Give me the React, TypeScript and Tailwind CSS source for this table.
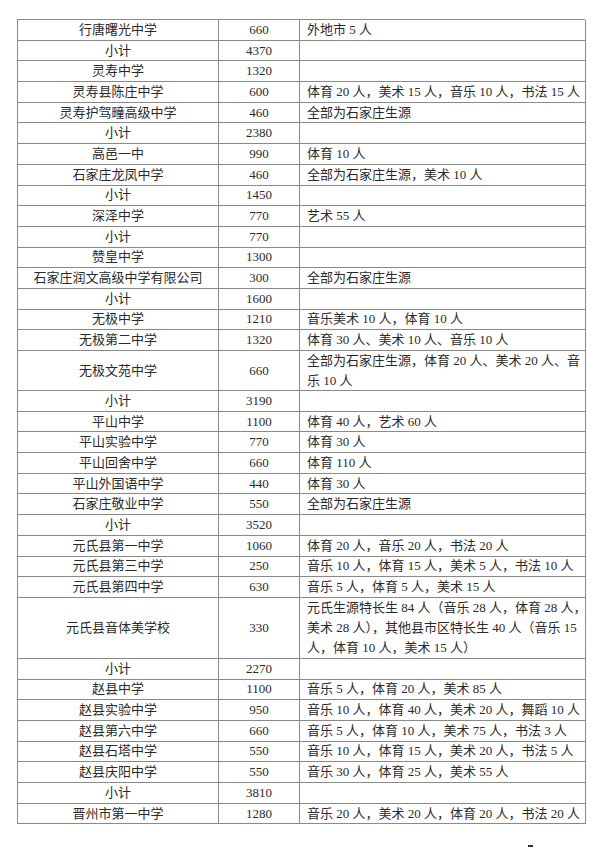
type Row = {
  name: string;
  count: string;
  note?: string[];
  h?: string;
};

const rows: Row[] = [
  { name: '行唐曙光中学', count: '660', note: ['外地市 5 人'] },
  { name: '小计', count: '4370' },
  { name: '灵寿中学', count: '1320' },
  { name: '灵寿县陈庄中学', count: '600', note: ['体育 20 人，美术 15 人，音乐 10 人，书法 15 人'] },
  { name: '灵寿护驾疃高级中学', count: '460', note: ['全部为石家庄生源'] },
  { name: '小计', count: '2380' },
  { name: '高邑一中', count: '990', note: ['体育 10 人'] },
  { name: '石家庄龙凤中学', count: '460', note: ['全部为石家庄生源，美术 10 人'] },
  { name: '小计', count: '1450' },
  { name: '深泽中学', count: '770', note: ['艺术 55 人'] },
  { name: '小计', count: '770' },
  { name: '赞皇中学', count: '1300' },
  { name: '石家庄润文高级中学有限公司', count: '300', note: ['全部为石家庄生源'] },
  { name: '小计', count: '1600' },
  { name: '无极中学', count: '1210', note: ['音乐美术 10 人，体育 10 人'] },
  { name: '无极第二中学', count: '1320', note: ['体育 30 人、美术 10 人、音乐 10 人'] },
  {
    name: '无极文苑中学',
    count: '660',
    note: ['全部为石家庄生源，体育 20 人、美术 20 人、音', '乐 10 人'],
    h: 'h-[40px]',
  },
  { name: '小计', count: '3190' },
  { name: '平山中学', count: '1100', note: ['体育 40 人，艺术 60 人'] },
  { name: '平山实验中学', count: '770', note: ['体育 30 人'] },
  { name: '平山回舍中学', count: '660', note: ['体育 110 人'] },
  { name: '平山外国语中学', count: '440', note: ['体育 30 人'] },
  { name: '石家庄敬业中学', count: '550', note: ['全部为石家庄生源'] },
  { name: '小计', count: '3520' },
  { name: '元氏县第一中学', count: '1060', note: ['体育 20 人，音乐 20 人，书法 20 人'] },
  { name: '元氏县第三中学', count: '250', note: ['音乐 10 人，体育 15 人，美术 5 人，书法 10 人'] },
  { name: '元氏县第四中学', count: '630', note: ['音乐 5 人，体育 5 人，美术 15 人'] },
  {
    name: '元氏县音体美学校',
    count: '330',
    note: [
      '元氏生源特长生 84 人（音乐 28 人，体育 28 人，',
      '美术 28 人），其他县市区特长生 40 人（音乐 15',
      '人，体育 10 人，美术 15 人）',
    ],
    h: 'h-[61px]',
  },
  { name: '小计', count: '2270' },
  { name: '赵县中学', count: '1100', note: ['音乐 5 人，体育 20 人，美术 85 人'] },
  { name: '赵县实验中学', count: '950', note: ['音乐 10 人，体育 40 人，美术 20 人，舞蹈 10 人'] },
  { name: '赵县第六中学', count: '660', note: ['音乐 5 人，体育 10 人，美术 75 人，书法 3 人'] },
  { name: '赵县石塔中学', count: '550', note: ['音乐 10 人，体育 15 人，美术 20 人，书法 5 人'] },
  { name: '赵县庆阳中学', count: '550', note: ['音乐 30 人，体育 25 人，美术 55 人'] },
  { name: '小计', count: '3810' },
  { name: '晋州市第一中学', count: '1280', note: ['音乐 20 人，美术 20 人，体育 20 人，书法 20 人'] },
];

export default function App() {
  return (
    <div
      className="h-[848px] w-[600px] overflow-hidden bg-white pt-[19px] text-[13px] text-[#2a2a2a]"
      style={{ fontFamily: '"Liberation Serif", "Noto Sans CJK SC", serif' }}
    >
      <div className="ml-[17px] grid w-[568px] grid-cols-[201px_81px_286px] border-l border-t border-[#8a8a8a]">
        {rows.map((r, i) => {
          const h = r.h ?? 'h-[20.7px]';
          return (
            <div key={i} className="contents">
              <div className={`${h} flex items-center justify-center border-b border-r border-[#8a8a8a] leading-[20px]`}>
                {r.name}
              </div>
              <div className={`${h} flex items-center justify-center border-b border-r border-[#8a8a8a] leading-[20px]`}>
                {r.count}
              </div>
              <div className={`${h} flex flex-col justify-center border-b border-r border-[#8a8a8a] pl-[7px] leading-[20px] whitespace-nowrap`}>
                {r.note?.map((line, j) => <span key={j}>{line}</span>)}
              </div>
            </div>
          );
        })}
      </div>

      {/* top of the page number, cut off by the crop */}
      <div className="ml-[528px] mt-[21px] h-[2px] w-[5px] bg-[#333]" />
    </div>
  );
}
